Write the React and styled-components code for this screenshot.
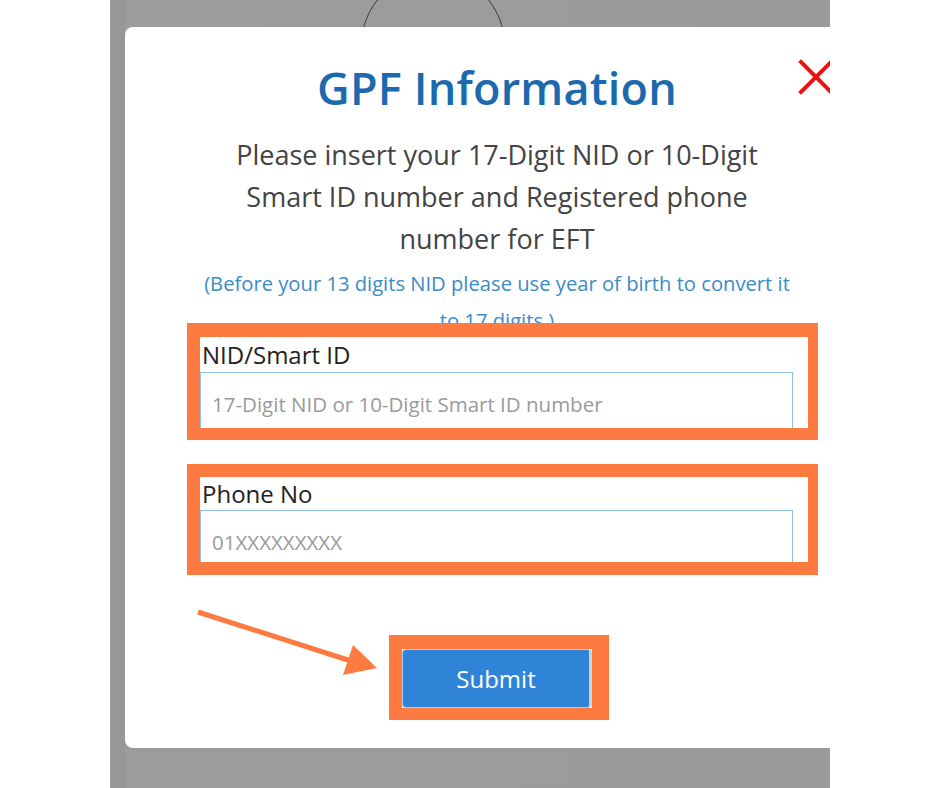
import React from 'react';
import styled, { createGlobalStyle } from 'styled-components';

const GlobalStyle = createGlobalStyle`
  html, body {
    margin: 0;
    padding: 0;
    background: #ffffff;
  }
  body {
    font-family: "Open Sans", "Noto Sans", sans-serif;
  }
`;

const Page = styled.div`
  width: 940px;
  height: 788px;
  display: flex;
  background: #ffffff;
  overflow: hidden;
`;

const Gutter = styled.div`
  width: 110px;
  flex-shrink: 0;
`;

const Backdrop = styled.div`
  position: relative;
  width: 720px;
  height: 788px;
  flex-shrink: 0;
  background: linear-gradient(90deg, #979797 0px, #979797 15px, #9c9c9c 15px, #9b9b9b 100%);
  overflow: hidden;
  padding: 27px 0 0 15px;
  box-sizing: border-box;
`;

const Ring = styled.div`
  position: absolute;
  left: 251px;
  top: -27px;
  width: 142px;
  height: 142px;
  border: 1px solid #3a3a3a;
  border-radius: 50%;
`;

const Modal = styled.div`
  position: relative;
  width: 744px;
  height: 721px;
  background: #ffffff;
  border-radius: 8px;
  display: flex;
  flex-direction: column;
  align-items: center;
  padding-top: 32px;
  box-sizing: border-box;
`;

const Title = styled.h2`
  margin: 0;
  font-size: 45px;
  font-weight: 600;
  line-height: 58px;
  color: #1c6aad;
  letter-spacing: 0.2px;
`;

const Close = styled.button`
  position: absolute;
  left: 673px;
  top: 32px;
  width: 36px;
  height: 36px;
  padding: 0;
  border: none;
  background: none;
  cursor: pointer;
`;

const Intro = styled.p`
  margin: 17px 0 0;
  width: 560px;
  text-align: center;
  font-size: 27px;
  line-height: 42px;
  color: #444444;
`;

const Note = styled.p`
  margin: 5px 0 0;
  width: 600px;
  text-align: center;
  font-size: 20.2px;
  line-height: 37px;
  color: #3a8cc7;
  height: 58px;
`;

const Form = styled.form`
  position: relative;
  align-self: flex-start;
  margin-left: 62px;
  display: flex;
  flex-direction: column;
  gap: 24px;
`;

const FieldBox = styled.div`
  width: 608px;
  height: ${p => p.inner}px;
  border-style: solid;
  border-color: #fd7b41;
  border-width: ${p => p.edges};
  overflow: hidden;
  background: #ffffff;
`;

const Label = styled.label`
  display: block;
  padding-left: 2px;
  font-size: 24px;
  line-height: ${p => p.lh}px;
  color: #222222;
`;

const Input = styled.input`
  display: block;
  width: 593px;
  height: 70px;
  box-sizing: border-box;
  border: 1px solid #8cc3df;
  padding: 0 0 6px 11px;
  font-family: inherit;
  font-size: 20.5px;
  color: #333;
  outline: none;
  &::placeholder {
    color: #9a9a9a;
  }
`;

const SubmitBox = styled.div`
  align-self: flex-start;
  margin: 60px 0 0 264px;
  border-style: solid;
  border-color: #fd7b41;
  border-width: 14px 17px 12px 13px;
  display: flex;
`;

const SubmitButton = styled.button`
  width: 190px;
  height: 59px;
  background: #3084d8;
  border: 1px solid #a9cdf0;
  border-right: 3px solid #c9d4de;
  border-radius: 4px;
  color: #ffffff;
  font-family: inherit;
  font-size: 24px;
  cursor: pointer;
`;

const Pointer = styled.svg`
  position: absolute;
  left: 68px;
  top: 578px;
  pointer-events: none;
`;

export default function App() {
  return (
    <Page>
      <GlobalStyle />
      <Gutter />
      <Backdrop>
        <Ring />
        <Modal>
          <Title>GPF Information</Title>
          <Close aria-label="close">
            <svg width="36" height="36" viewBox="0 0 36 36">
              <path d="M3 3 L33 33 M33 3 L3 33" stroke="#ee1111" strokeWidth="4" strokeLinecap="square" />
            </svg>
          </Close>
          <Intro>
            Please insert your 17-Digit NID or 10-Digit Smart ID number and Registered phone number for EFT
          </Intro>
          <Note>(Before your 13 digits NID please use year of birth to convert it to 17 digits )</Note>
          <Form>
            <FieldBox inner={91} edges="14px 10px 12px 13px">
              <Label lh={35}>NID/Smart ID</Label>
              <Input placeholder="17-Digit NID or 10-Digit Smart ID number" />
            </FieldBox>
            <FieldBox inner={85} edges="13px 10px 13px 13px">
              <Label lh={33}>Phone No</Label>
              <Input placeholder="01XXXXXXXXX" />
            </FieldBox>
          </Form>
          <SubmitBox>
            <SubmitButton type="button">Submit</SubmitButton>
          </SubmitBox>
          <Pointer width="190" height="100" viewBox="0 0 190 100">
            <line x1="5" y1="7" x2="158" y2="56" stroke="#fd7b41" strokeWidth="5" />
            <polygon points="160,40 184,63 150,70" fill="#fd7b41" />
          </Pointer>
        </Modal>
      </Backdrop>
    </Page>
  );
}
